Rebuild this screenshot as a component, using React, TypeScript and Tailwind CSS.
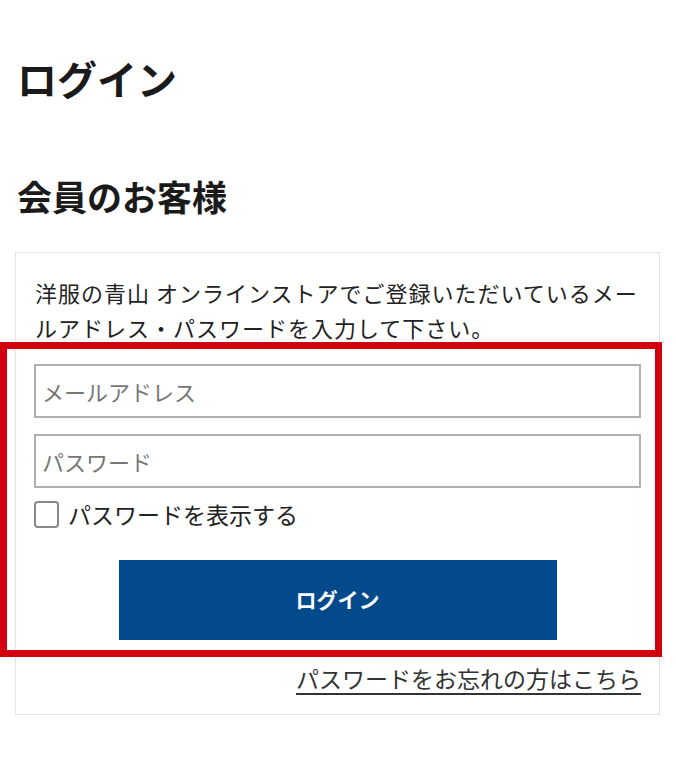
import React from "react";

const font = { fontFamily: '"Noto Sans CJK JP", "Noto Sans", sans-serif' };

export default function App() {
  return (
    <div className="relative w-[676px] min-h-[763px] bg-white text-[#1a1a1a]" style={font}>
      <div className="pt-12 pl-[17px]">
        <h1 className="text-[40px] leading-[60px] font-bold">ログイン</h1>
        <h2 className="mt-[62px] text-[35px] leading-[51px] font-bold">会員のお客様</h2>
      </div>
      <div className="ml-[15px] mt-[31px] w-[645px] border border-[#e3e3e3] px-[18px] pt-[22px] pb-[20px]">
        <p className="px-[1px] text-[22px] leading-[35px] text-[#222] tracking-[1px]">
          洋服の青山 オンラインストアでご登録いただいているメールアドレス・パスワードを入力して下さい。
        </p>
        <div className="mt-[19px] flex flex-col gap-4">
          <input
            type="text"
            placeholder="メールアドレス"
            className="h-[54px] w-full border-2 border-[#b0b0b0] pl-[6px] pr-2 text-[22px] placeholder:text-[#777] outline-none"
            style={font}
          />
          <input
            type="text"
            placeholder="パスワード"
            className="h-[54px] w-full border-2 border-[#b0b0b0] pl-[6px] pr-2 text-[22px] placeholder:text-[#777] outline-none"
            style={font}
          />
        </div>
        <label className="mt-[10px] flex items-center gap-[9px] text-[23px] leading-[32px] text-[#222]">
          <span className="h-[27px] w-[25px] rounded-[4px] border-2 border-[#888] bg-white" />
          パスワードを表示する
        </label>
        <div className="mt-[30px] flex justify-center">
          <button className="h-[80px] w-[438px] bg-[#034a8c] text-[21px] font-bold text-white" style={font}>
            ログイン
          </button>
        </div>
        <div className="mt-[22px] flex justify-end">
          <a className="text-[23px] leading-[32px] text-[#333] underline underline-offset-[5px]">
            パスワードをお忘れの方はこちら
          </a>
        </div>
      </div>
      <div className="pointer-events-none absolute left-0 top-[342px] h-[315px] w-[662px] border-[7px] border-[#d2000f]" />
    </div>
  );
}
